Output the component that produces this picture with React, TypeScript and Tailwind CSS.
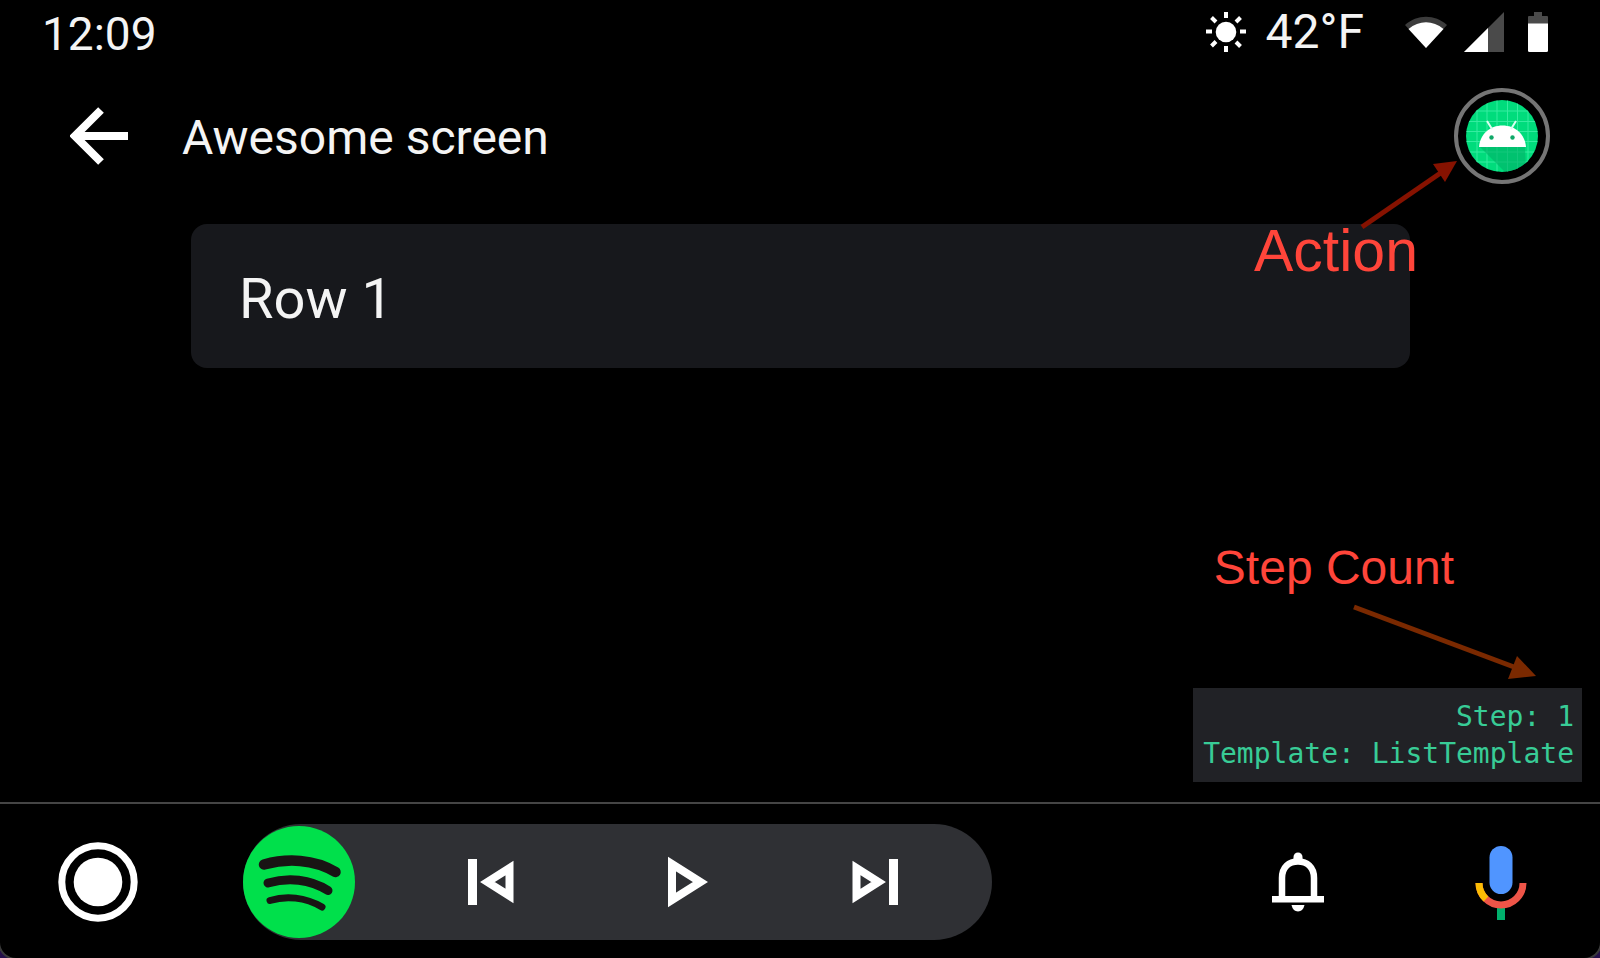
import type { ReactNode } from "react";

function Glyph({ box, className, children }: { box: string; className: string; children: ReactNode }) {
  return (
    <svg viewBox={box} className={className} fill="none" aria-hidden="true">
      {children}
    </svg>
  );
}

function StatusBar() {
  return (
    <header className="flex h-16 items-center justify-between pr-[52px] pl-[42px]">
      <time className="pt-1 text-[46px] leading-none">12:09</time>
      <div className="flex items-center">
        <Glyph box="0 0 40 40" className="mr-5 size-10">
          <circle cx="20" cy="20" r="10.3" fill="#fff" />
          <path
            d="M20 0v6M20 34v6M0 19.500h6M34 19.500h6M5.500 5.500l4.500 4.500M30 10l4.500-4.500M5.500 34l4.500-4.500M30 30l4.500 4.500"
            stroke="#fff"
            strokeWidth="4"
          />
        </Glyph>
        <span className="mr-10 text-5xl leading-none">42°F</span>
        <Glyph box="0 0 44 32" className="mr-4 h-8 w-11">
          <path d="M1 9C13-2 31-2 43 9L22 32Z" fill="#3c3c3c" />
          <path d="M4.500 13C15 4 29 4 39.500 13L22 32Z" fill="#fff" />
        </Glyph>
        <Glyph box="0 0 40 40" className="mr-6 size-10">
          <path d="M40 0V40H0Z" fill="#4a4a4a" />
          <path d="M24 16V40H0Z" fill="#fff" />
        </Glyph>
        <Glyph box="0 0 20 40" className="h-10 w-5">
          <path d="M6 0h8v4h5q1 0 1 1v7H0V5q0-1 1-1h5Z" fill="#4a4a4a" />
          <path d="M0 11.500h20V38.500q0 1.500-1.500 1.500h-17Q0 40 0 38.500Z" fill="#fff" />
        </Glyph>
      </div>
    </header>
  );
}

function RobotIcon() {
  return (
    <Glyph box="0 0 72 72" className="size-18">
      <defs>
        <clipPath id="disc">
          <circle cx="36" cy="36" r="36" />
        </clipPath>
      </defs>
      <g clipPath="url(#disc)">
        <rect width="72" height="72" fill="#00dc7c" />
        <path
          d="M11 0V72M21 0V72M31 0V72M41.500 0V72M51.500 0V72M62 0V72M0 11H72M0 21.500H72M0 31.500H72M0 41.500H72M0 52H72M0 62H72"
          stroke="#35eca0"
          strokeWidth="1"
        />
        <path d="M14 47L39 72H60L59 47Z" fill="#00b468" fillOpacity=".65" />
      </g>
      <path d="M13 47C14 34 24 25.500 36.500 25.500S59 34 60 47Z" fill="#fff" />
      <path d="M21 21l5 8M50 21l-5 8" stroke="#d9fff0" strokeWidth="2" />
      <circle cx="25.500" cy="37.500" r="2.200" fill="#10a868" />
      <circle cx="46.500" cy="37.500" r="2.200" fill="#10a868" />
    </Glyph>
  );
}

function TitleBar() {
  return (
    <div className="flex h-36 items-center pr-[50px] pl-[70px]">
      <button type="button" aria-label="Back">
        <Glyph box="0 0 58 58" className="size-[58px]">
          <path d="M58 29H6M31 3L5 29L31 55" stroke="#fff" strokeWidth="8" />
        </Glyph>
      </button>
      <h1 className="ml-[54px] pt-1 text-5xl leading-none">Awesome screen</h1>
      <div className="relative ml-auto">
        <button
          type="button"
          aria-label="App action"
          className="flex size-24 items-center justify-center rounded-full border-4 border-[#757575]"
        >
          <RobotIcon />
        </button>
        <div className="absolute top-[72px] right-[93px] z-10 w-[100px]">
          <Glyph box="0 0 100 70" className="h-[70px] w-[100px]">
            <path d="M5 67L85 12" stroke="#861200" strokeWidth="5" />
            <path d="M100 1L76 4L88 22Z" fill="#861200" />
          </Glyph>
        </div>
        <p className="absolute top-[134px] right-[132px] z-10 font-['Liberation_Sans',Arial,sans-serif] text-[59px] leading-none text-[#ff453a]">
          Action
        </p>
      </div>
    </div>
  );
}

function StepInfo() {
  return (
    <aside className="relative mt-auto mr-[18px] mb-5 self-end bg-[#212226] py-2.5 pr-2 pl-2.5 text-right font-['DejaVu_Sans_Mono',monospace] text-[28px] leading-[37px] text-[#38cc96]">
      <p className="absolute right-32 bottom-[190px] font-['Liberation_Sans',Arial,sans-serif] text-5xl leading-none whitespace-nowrap text-[#ff453a]">
        Step Count
      </p>
      <div className="absolute right-[46px] bottom-[103px]">
        <Glyph box="0 0 184 76" className="h-[76px] w-[184px]">
          <path d="M2 4L162 64" stroke="#7a2900" strokeWidth="5" />
          <path d="M184 73L165 53L156 76Z" fill="#7a2900" />
        </Glyph>
      </div>
      <p>Step: 1</p>
      <p>Template: ListTemplate</p>
    </aside>
  );
}

function NavBar() {
  return (
    <footer className="flex h-[156px] items-center border-t-2 border-[#454545] pt-0.5 pr-[73px] pl-[58px]">
      <button type="button" aria-label="Home">
        <Glyph box="0 0 80 80" className="size-20">
          <circle cx="40" cy="40" r="36.200" stroke="#fff" strokeWidth="7" />
          <circle cx="40" cy="40" r="24.300" fill="#fff" />
        </Glyph>
      </button>
      <div className="ml-[105px] flex h-[116px] w-[749px] items-center rounded-full bg-[#2f3034]">
        <button type="button" aria-label="Spotify">
          <Glyph box="0 0 112 112" className="size-28">
            <circle cx="56" cy="56" r="56" fill="#00e04b" />
            <g stroke="#191414" strokeLinecap="round">
              <path d="M21 38.500C44 32 71 33 92.500 46" strokeWidth="10.500" />
              <path d="M25 57C45 51 67 53 85 64.500" strokeWidth="9" />
              <path d="M27 74.500C43 69.500 62 71 79 81" strokeWidth="7" />
            </g>
          </Glyph>
        </button>
        <div className="flex flex-1 items-center justify-between pr-[94px] pl-[113px]">
          <button type="button" aria-label="Previous track">
            <Glyph box="0 0 46 46" className="size-[46px]">
              <path d="M0 0H9V46H0Z" fill="#fff" />
              <path d="M41.500 9V37L19.500 23Z" stroke="#fff" strokeWidth="8" />
            </Glyph>
          </button>
          <button type="button" aria-label="Play" className="pl-2.5">
            <Glyph box="0 0 40 52" className="h-[52px] w-10">
              <path d="M4 8V44L32.500 26Z" stroke="#fff" strokeWidth="8" />
            </Glyph>
          </button>
          <button type="button" aria-label="Next track">
            <Glyph box="0 0 46 46" className="size-[46px]">
              <path d="M37 0H46V46H37Z" fill="#fff" />
              <path d="M4.500 9V37L26.500 23Z" stroke="#fff" strokeWidth="8" />
            </Glyph>
          </button>
        </div>
      </div>
      <button type="button" aria-label="Notifications" className="ml-auto">
        <Glyph box="0 0 52 60" className="h-[60px] w-[52px]">
          <path d="M0 44H52V50.500H0Z" fill="#fff" />
          <path d="M10 46V26C10 15 17 9.500 26 9.500S42 15 42 26V46" stroke="#fff" strokeWidth="6.500" />
          <path d="M21.500 10V5a4.500 4.500 0 0 1 9 0V10Z" fill="#fff" />
          <path d="M19.500 53H32.500Q31 59.500 26 59.500T19.500 53Z" fill="#fff" />
        </Glyph>
      </button>
      <button type="button" aria-label="Voice assistant" className="ml-[151px] pt-0.5">
        <Glyph box="0 0 52 74" className="h-[74px] w-[52px]">
          <rect x="14.500" y="0" width="23" height="48" rx="11.500" fill="#5095ff" />
          <path d="M26 60V74" stroke="#00b06c" strokeWidth="8" />
          <path d="M4 37A22 22 0 0 0 48 37" stroke="#ee5548" strokeWidth="7" />
          <path d="M4 37A22 22 0 0 0 11 53" stroke="#fbbc04" strokeWidth="7" />
        </Glyph>
      </button>
    </footer>
  );
}

export default function App() {
  return (
    <div className="min-h-screen overflow-hidden bg-[#25104a]">
      <main className="flex min-h-screen flex-col rounded-b-2xl bg-black font-[Roboto,sans-serif] text-[#f4f4f4] shadow-[0_0_0_2px_#3a3a3a]">
        <StatusBar />
        <TitleBar />
        <section className="mr-[190px] ml-[191px] mt-4">
          <button
            type="button"
            className="flex h-36 w-full items-center rounded-2xl bg-[#17181c] px-12 pt-1.5 text-left text-[56px] leading-none"
          >
            Row 1
          </button>
        </section>
        <StepInfo />
        <NavBar />
      </main>
    </div>
  );
}
